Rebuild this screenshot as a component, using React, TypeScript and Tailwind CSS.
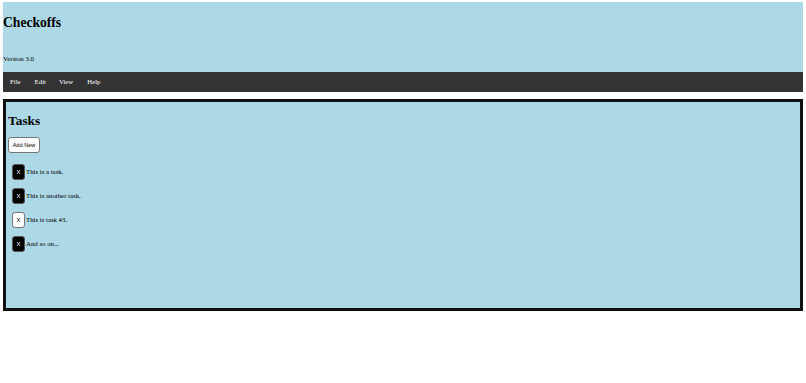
import React from "react";

const tasks = [
  { text: "This is a task.", done: true },
  { text: "This is another task.", done: true },
  { text: "This is task #3.", done: false },
  { text: "And so on...", done: true },
];

export default function App() {
  return (
    <div className="w-[806px] h-[383px] bg-white px-[3px] pt-[2px]" style={{ fontFamily: '"Liberation Serif", serif' }}>
      <div className="bg-[#add8e6] h-[70px] flex flex-col">
        <h1 className="text-[13.6px] font-bold leading-none mt-[14px] text-black">Checkoffs</h1>
        <p className="text-[6.8px] leading-none mt-[26px] text-black">Version 3.0</p>
      </div>
      <div className="bg-[#333333] h-[20px] flex items-center text-white text-[6.8px]">
        <span className="ml-[4px] px-[3px]">File</span>
        <span className="ml-[8px] px-[3px]">Edit</span>
        <span className="ml-[7px] px-[3px]">View</span>
        <span className="ml-[8px] px-[3px]">Help</span>
      </div>
      <div className="mt-[7px] h-[212px] bg-[#add8e6] border-[3px] border-[#111] pl-[2px] pt-[12px]">
        <h2 className="text-[13.4px] font-bold leading-none text-black">Tasks</h2>
        <button
          className="mt-[10px] h-[16px] w-[32px] bg-white border border-[#777] rounded-[3px] text-[5.6px] text-black flex items-center justify-center"
          style={{ fontFamily: '"Liberation Sans", sans-serif' }}
        >
          Add New
        </button>
        <div className="mt-[11px] pl-[4px] flex flex-col gap-[8px]">
          {tasks.map((t, i) => (
            <div key={i} className="flex items-center h-[16px]">
              <span
                className={
                  t.done
                    ? "w-[13px] h-[16px] bg-black text-white rounded-[3px] border border-[#555] flex items-center justify-center text-[6px]"
                    : "w-[13px] h-[16px] bg-white text-black rounded-[3px] border border-[#777] flex items-center justify-center text-[6px]"
                }
                style={{ fontFamily: '"Liberation Sans", sans-serif' }}
              >
                X
              </span>
              <span className="ml-[1px] text-[6.8px] text-black">{t.text}</span>
            </div>
          ))}
        </div>
      </div>
    </div>
  );
}
